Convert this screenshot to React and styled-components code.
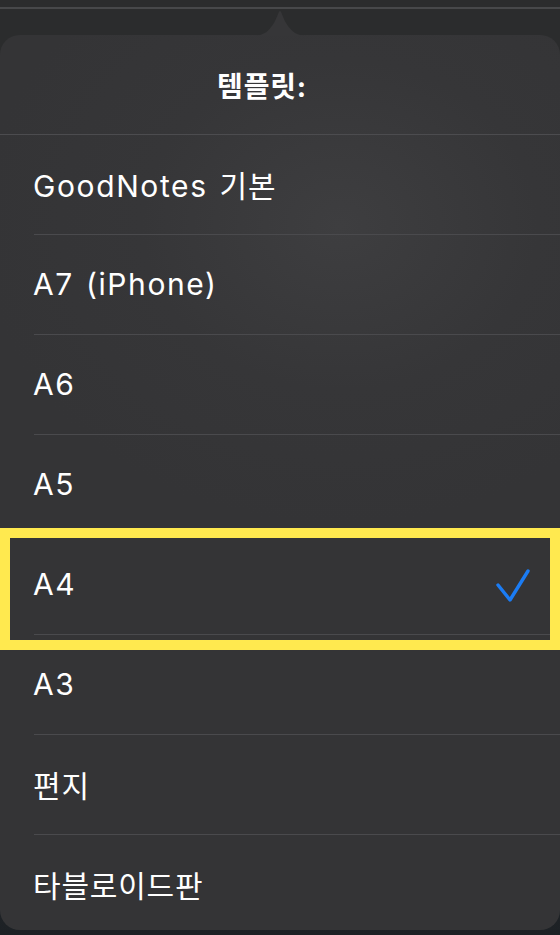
import React from "react";
import styled, { createGlobalStyle } from "styled-components";

const GlobalStyle = createGlobalStyle`
  html, body {
    margin: 0;
    padding: 0;
    background: #202427;
  }
  body {
    font-family: Inter, "Noto Sans CJK KR", "Noto Sans", sans-serif;
    -webkit-font-smoothing: antialiased;
  }
`;

const templates = [
  "GoodNotes 기본",
  "A7 (iPhone)",
  "A6",
  "A5",
  "A4",
  "A3",
  "편지",
  "타블로이드판",
];
const selected = "A4";

// split a label into latin / hangul runs so each can get its own tracking
const runs = (text) => text.match(/[\uAC00-\uD7A3]+|[^\uAC00-\uD7A3]+/g) || [];
const isHangul = (s) => /[\uAC00-\uD7A3]/.test(s);

function App() {
  return (
    <>
      <GlobalStyle />
      <Screen>
        <TopBar />
        <Popover>
          <Arrow width="60" height="26" viewBox="0 0 60 26">
            <path d="M0 26 C14 26 18 22 24 13 C27 8 28.5 1 30 1 C31.5 1 33 8 36 13 C42 22 46 26 60 26 Z" fill="#363638" />
          </Arrow>
          <Header>
            <Title>템플릿:</Title>
          </Header>
          <List>
            {templates.map((name) => (
              <Row key={name}>
                <Label>
                  {runs(name).map((part, i) => (
                    <Run key={i} $hangul={isHangul(part)}>{part}</Run>
                  ))}
                </Label>
                {name === selected && (
                  <Check width="36" height="36" viewBox="0 0 36 36">
                    <path d="M3 17 L15 32 L33 3" fill="none" stroke="#1b7cf4" strokeWidth="3.4" strokeLinecap="round" strokeLinejoin="round" />
                  </Check>
                )}
              </Row>
            ))}
          </List>
        </Popover>
        <Highlight />
      </Screen>
    </>
  );
}

const Screen = styled.div`
  position: relative;
  width: 560px;
  height: 935px;
  overflow: hidden;
  background: linear-gradient(#2b2c2d 0, #2b2c2d 120px, #24272a 800px, #1d2125 935px);
`;

const TopBar = styled.div`
  height: 7px;
  border-bottom: 2px solid #47484a;
  margin-bottom: 26px;
`;

const Popover = styled.div`
  position: relative;
  height: 895px;
  border-radius: 20px;
  background: radial-gradient(ellipse 360px 300px at 340px 190px, #3e3e40 0%, #363638 55%, #343436 100%);
  color: #ffffff;
`;

const Arrow = styled.svg`
  position: absolute;
  top: -25px;
  left: 250px;
  display: block;
`;

const Header = styled.div`
  height: 99px;
  border-bottom: 1px solid #4c4c4f;
  display: flex;
  align-items: center;
  justify-content: center;
  padding-right: 36px;
`;

const Title = styled.div`
  font-size: 28px;
  font-weight: 700;
  letter-spacing: 0.8px;
  padding-top: 1px;
`;

const List = styled.div`
  display: flex;
  flex-direction: column;
  border-radius: 0 0 20px 20px;
  overflow: hidden;
`;

const Row = styled.div`
  height: 99px;
  margin-left: 34px;
  border-bottom: 1px solid #4a4a4d;
  display: flex;
  align-items: center;
  justify-content: space-between;
  padding-right: 29px;
  &:last-child {
    border-bottom: none;
  }
`;

const Label = styled.div`
  font-size: 30px;
  font-weight: 400;
  margin-left: -1px;
  margin-top: -2px;
  white-space: pre;
`;

const Run = styled.span`
  letter-spacing: ${(p) => (p.$hangul ? "0.8px" : "1.6px")};
  word-spacing: 2px;
`;

const Check = styled.svg`
  display: block;
  margin-top: 2px;
`;

const Highlight = styled.div`
  position: absolute;
  left: 0;
  top: 528px;
  width: 560px;
  height: 122px;
  box-sizing: border-box;
  border: 10px solid #ffe94f;
  pointer-events: none;
`;

export default App;
